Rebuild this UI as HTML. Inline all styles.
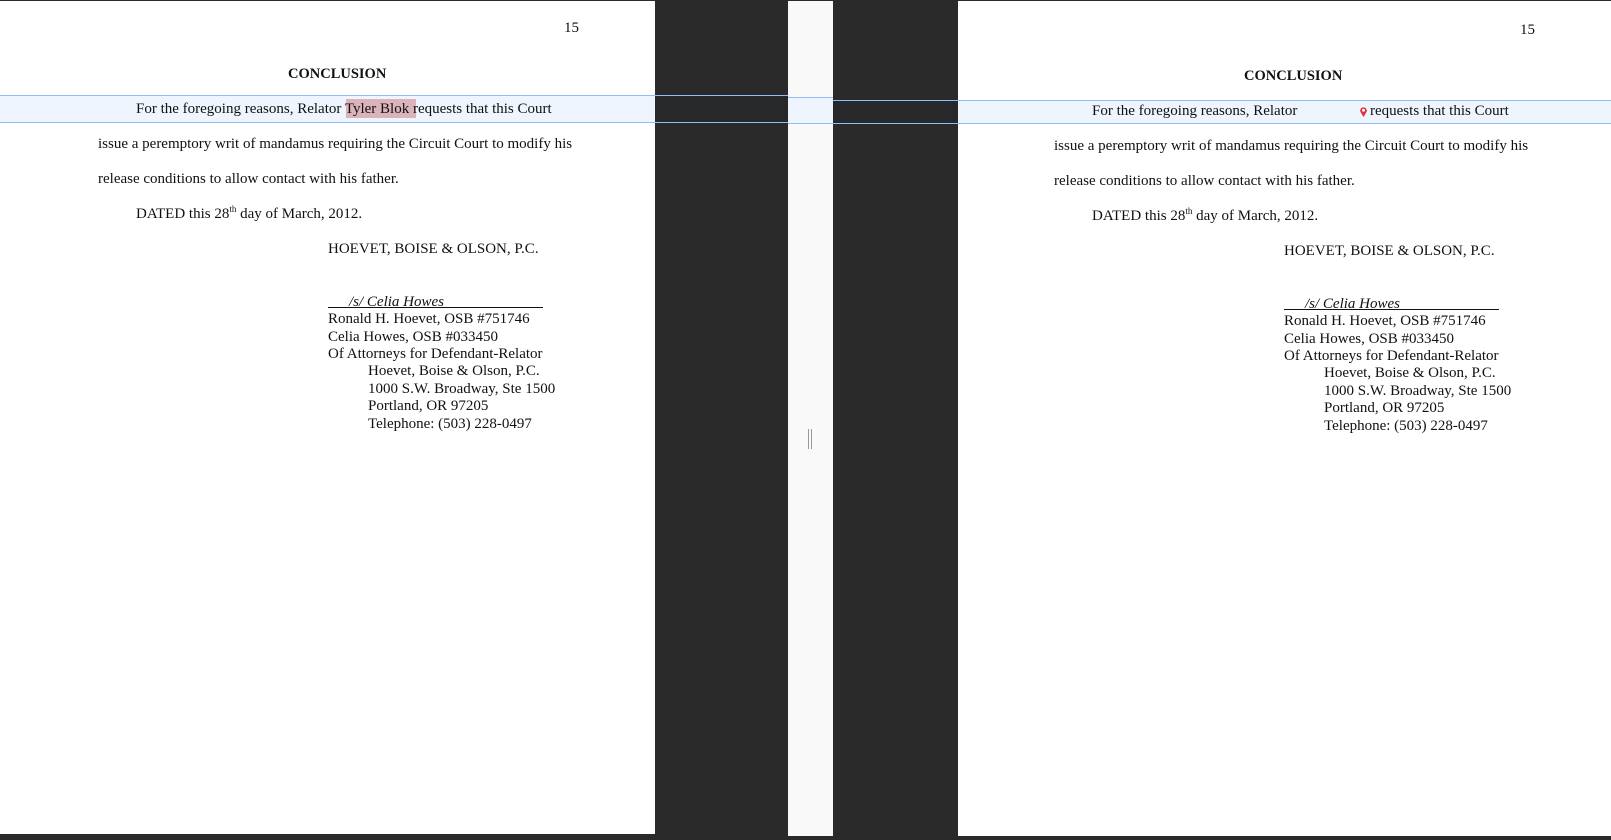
<!DOCTYPE html>
<html><head><meta charset="utf-8"><style>
*{margin:0;padding:0}
body{width:1611px;height:840px;background:#2a2a2a;position:relative;overflow:hidden;font-family:"Liberation Serif",serif;font-size:15px;color:#111}
.pg{position:absolute;background:#fff}
.t{position:absolute;white-space:nowrap;line-height:18px;margin-top:1px}
.band{position:absolute;background:#eef5fe;border-top:1px solid #8fbdf5;border-bottom:1px solid #8fbdf5}
.dark{position:absolute;background:#262729}
sup{font-size:9px;vertical-align:6px;line-height:0}
</style></head><body>
<div class="pg" style="left:0;top:1px;width:655px;height:833px"></div>
<div class="pg" style="left:788px;top:1px;width:45px;height:835px;background:#f9f9f9"></div>
<div class="pg" style="left:958px;top:1px;width:653px;height:835px"></div>
<div style="position:absolute;left:808px;top:429px;width:1px;height:20px;background:#999"></div>
<div style="position:absolute;left:811px;top:429px;width:1px;height:20px;background:#999"></div>

<div class="band" style="left:0;top:95px;width:788px;height:26px"></div>
<div class="band" style="left:788px;top:97px;width:45px;height:25px"></div>
<div class="band" style="left:833px;top:100px;width:778px;height:22px"></div>
<div class="dark" style="left:655px;top:96px;width:133px;height:26px;background:#27282a"></div>
<div class="dark" style="left:833px;top:101px;width:125px;height:22px;background:#27282a"></div>

<!-- left page -->
<div class="t" style="left:564px;top:18px">15</div>
<div class="t" style="left:288px;top:64px;font-weight:bold;font-size:14.5px">CONCLUSION</div>
<div style="position:absolute;left:346px;top:99px;width:70px;height:19px;background:#dbb4ba"></div>
<div class="t" style="left:136px;top:99px">For the foregoing reasons, Relator Tyler Blok requests that this Court</div>
<div class="t" style="left:98px;top:134px">issue a peremptory writ of mandamus requiring the Circuit Court to modify his</div>
<div class="t" style="left:98px;top:169px">release conditions to allow contact with his father.</div>
<div class="t" style="left:136px;top:204px">DATED this 28<sup>th</sup> day of March, 2012.</div>
<div class="t" style="left:328px;top:239px">HOEVET, BOISE &amp; OLSON, P.C.</div>
<div class="t" style="left:349px;top:292px;font-style:italic">/s/ Celia Howes</div>
<div style="position:absolute;left:328px;top:307px;width:215px;height:1px;background:#111"></div>
<div class="t" style="left:328px;top:309px">Ronald H. Hoevet, OSB #751746</div>
<div class="t" style="left:328px;top:327px">Celia Howes, OSB #033450</div>
<div class="t" style="left:328px;top:344px">Of Attorneys for Defendant-Relator</div>
<div class="t" style="left:368px;top:361px">Hoevet, Boise &amp; Olson, P.C.</div>
<div class="t" style="left:368px;top:379px">1000 S.W. Broadway, Ste 1500</div>
<div class="t" style="left:368px;top:396px">Portland, OR 97205</div>
<div class="t" style="left:368px;top:414px">Telephone: (503) 228-0497</div>

<!-- right page -->
<div class="t" style="left:1520px;top:20px">15</div>
<div class="t" style="left:1244px;top:66px;font-weight:bold;font-size:14.5px">CONCLUSION</div>
<div class="t" style="left:1092px;top:101px">For the foregoing reasons, Relator</div>
<svg style="position:absolute;left:1359px;top:106px" width="9" height="12" viewBox="0 0 9 12"><path d="M4.5 11 L1.5 6 A3.3 3.3 0 1 1 7.5 6 Z" fill="#e0303a"/><circle cx="4.5" cy="4.3" r="1.5" fill="#fff"/></svg>
<div class="t" style="left:1370px;top:101px">requests that this Court</div>
<div class="t" style="left:1054px;top:136px">issue a peremptory writ of mandamus requiring the Circuit Court to modify his</div>
<div class="t" style="left:1054px;top:171px">release conditions to allow contact with his father.</div>
<div class="t" style="left:1092px;top:206px">DATED this 28<sup>th</sup> day of March, 2012.</div>
<div class="t" style="left:1284px;top:241px">HOEVET, BOISE &amp; OLSON, P.C.</div>
<div class="t" style="left:1305px;top:294px;font-style:italic">/s/ Celia Howes</div>
<div style="position:absolute;left:1284px;top:309px;width:215px;height:1px;background:#111"></div>
<div class="t" style="left:1284px;top:311px">Ronald H. Hoevet, OSB #751746</div>
<div class="t" style="left:1284px;top:329px">Celia Howes, OSB #033450</div>
<div class="t" style="left:1284px;top:346px">Of Attorneys for Defendant-Relator</div>
<div class="t" style="left:1324px;top:363px">Hoevet, Boise &amp; Olson, P.C.</div>
<div class="t" style="left:1324px;top:381px">1000 S.W. Broadway, Ste 1500</div>
<div class="t" style="left:1324px;top:398px">Portland, OR 97205</div>
<div class="t" style="left:1324px;top:416px">Telephone: (503) 228-0497</div>
</body></html>
